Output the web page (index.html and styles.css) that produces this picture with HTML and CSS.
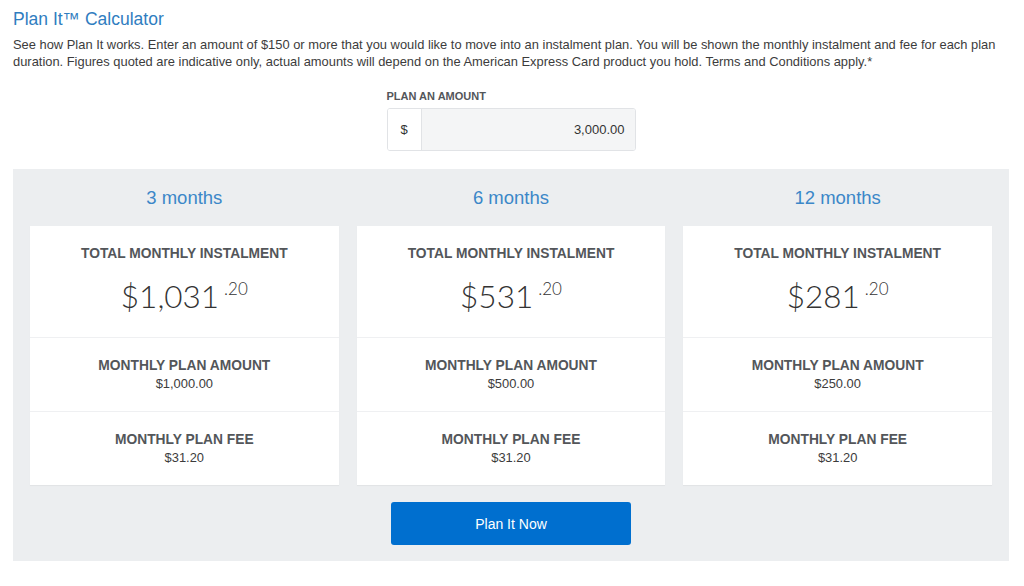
FILE: index.html
```html
<!DOCTYPE html>
<html lang="en">

<head>
    <meta charset="UTF-8">
    <meta name="viewport" content="width=device-width, initial-scale=1.0">
    <title>Plan It Calculator</title>
    <link rel="stylesheet" href="styles.css">
</head>

<body>
    <div class="page">
        <h1 class="title">Plan It&trade; Calculator</h1>
        <p class="intro">See how Plan It works. Enter an amount of $150 or more that you would like to move into an instalment plan. You will be shown the monthly instalment and fee for each plan duration. Figures quoted are indicative only, actual amounts will depend on the American Express Card product you hold. Terms and Conditions apply.*</p>

        <div class="amount">
            <label for="amount">PLAN AN AMOUNT</label>
            <div class="input-group">
                <span class="addon">$</span>
                <input type="text" id="amount" value="3,000.00">
            </div>
        </div>

        <div class="plans">
            <div class="plan-grid">
                <div class="plan">
                    <h3>3 months</h3>
                    <div class="card">
                        <div class="row row-total">
                            <h4>TOTAL MONTHLY INSTALMENT</h4>
                            <div class="big">$1,031<sup>.20</sup></div>
                        </div>
                        <div class="row">
                            <h4>MONTHLY PLAN AMOUNT</h4>
                            <div class="val">$1,000.00</div>
                        </div>
                        <div class="row">
                            <h4>MONTHLY PLAN FEE</h4>
                            <div class="val">$31.20</div>
                        </div>
                    </div>
                </div>
                <div class="plan">
                    <h3>6 months</h3>
                    <div class="card">
                        <div class="row row-total">
                            <h4>TOTAL MONTHLY INSTALMENT</h4>
                            <div class="big">$531<sup>.20</sup></div>
                        </div>
                        <div class="row">
                            <h4>MONTHLY PLAN AMOUNT</h4>
                            <div class="val">$500.00</div>
                        </div>
                        <div class="row">
                            <h4>MONTHLY PLAN FEE</h4>
                            <div class="val">$31.20</div>
                        </div>
                    </div>
                </div>
                <div class="plan">
                    <h3>12 months</h3>
                    <div class="card">
                        <div class="row row-total">
                            <h4>TOTAL MONTHLY INSTALMENT</h4>
                            <div class="big">$281<sup>.20</sup></div>
                        </div>
                        <div class="row">
                            <h4>MONTHLY PLAN AMOUNT</h4>
                            <div class="val">$250.00</div>
                        </div>
                        <div class="row">
                            <h4>MONTHLY PLAN FEE</h4>
                            <div class="val">$31.20</div>
                        </div>
                    </div>
                </div>
            </div>
            <button class="btn">Plan It Now</button>
        </div>
    </div>
</body>
</html>
```

FILE: styles.css
```css
body {
    margin: 0;
    background-color: #fff;
    font-family: "Liberation Sans", Arial, sans-serif;
    color: #333;
}

.page {
    width: 996px;
    padding: 9px 15px 0 13px;
}

.title {
    margin: 0;
    font-size: 17.5px;
    line-height: 20px;
    font-weight: normal;
    color: #2f7dc0;
}

.intro {
    margin: 7px 0 0;
    font-size: 12.9px;
    line-height: 17px;
    color: #3c3c3c;
}

.amount {
    width: 249px;
    margin: 20px auto 0;
}

.amount label {
    display: block;
    font-size: 11px;
    font-weight: bold;
    color: #53565a;
    line-height: 12px;
    margin-bottom: 6px;
}

.input-group {
    display: flex;
    height: 43px;
    border: 1px solid #e1e3e6;
    border-radius: 3px;
    box-sizing: border-box;
    overflow: hidden;
}

.addon {
    width: 33px;
    display: flex;
    align-items: center;
    justify-content: center;
    font-size: 13px;
    color: #333;
    background-color: #fff;
    border-right: 1px solid #e1e3e6;
}

.input-group input {
    flex: 1;
    border: 0;
    padding: 0 10px;
    background-color: #f4f5f6;
    text-align: right;
    font-family: "Liberation Sans", Arial, sans-serif;
    font-size: 13px;
    color: #333;
}

.plans {
    margin-top: 18px;
    background-color: #eceef0;
    padding: 0 17px 16px;
    text-align: center;
}

.plan-grid {
    display: grid;
    grid-template-columns: repeat(3, 1fr);
    gap: 18px;
}

.plan h3 {
    margin: 0;
    height: 57px;
    line-height: 57px;
    font-size: 18.5px;
    font-weight: normal;
    color: #3b87c8;
}

.card {
    background-color: #fff;
    box-shadow: 0 1px 1px rgba(0, 0, 0, 0.04);
}

.row {
    height: 74px;
    box-sizing: border-box;
    padding-top: 19px;
    border-top: 1px solid #eff0f2;
}

.row-total {
    height: 111px;
    padding-top: 19px;
    border-top: 0;
}

.row h4 {
    margin: 0;
    font-size: 13.8px;
    line-height: 17px;
    color: #53565a;
}

.val {
    margin-top: 2px;
    font-size: 12.9px;
    line-height: 16px;
    color: #3c3c3c;
}

.big {
    margin-top: 13px;
    font-family: Lato, "Liberation Sans", sans-serif;
    font-weight: 300;
    font-size: 31.5px;
    line-height: 42px;
    color: #333;
}

.big sup {
    font-size: 17px;
    margin-left: 5px;
    vertical-align: 13px;
    line-height: 0;
}

.btn {
    display: block;
    width: 240px;
    height: 43px;
    margin: 17px auto 0;
    border: 0;
    border-radius: 3px;
    background-color: #006fcf;
    color: #fff;
    font-family: "Liberation Sans", Arial, sans-serif;
    font-size: 14px;
}
```
